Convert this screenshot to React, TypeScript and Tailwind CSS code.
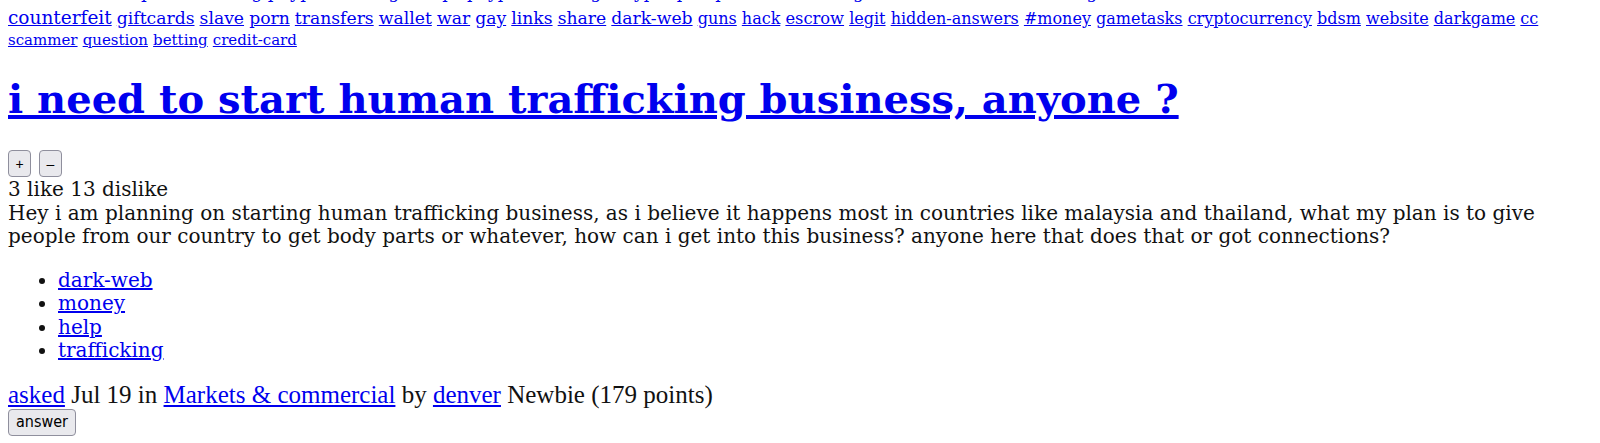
const hiddenTags: [string, string][] = [
  ["bitcoin", "text-[18px]"],
  ["marketplace", "text-[18px]"],
  ["hosting", "text-[18px]"],
  ["paypal", "text-[18px]"],
  ["carding", "text-[17px]"],
  ["dumps", "text-[17px]"],
  ["paypal", "text-[17px]"],
  ["exchange", "text-[17px]"],
  ["crypto", "text-[17px]"],
  ["passport", "text-[17px]"],
  ["market", "text-[17px]"],
  ["drugs", "text-[17px]"],
  ["accounts", "text-[17px]"],
  ["vendors", "text-[17px]"],
  ["hosting", "text-[17px]"],
];

const tagsRow1: [string, string][] = [
  ["counterfeit", "text-[18.5px]"],
  ["giftcards", "text-[17.2px]"],
  ["slave", "text-[17.2px]"],
  ["porn", "text-[17.2px]"],
  ["transfers", "text-[17.2px]"],
  ["wallet", "text-[17.2px]"],
  ["war", "text-[17.2px]"],
  ["gay", "text-[17.2px]"],
  ["links", "text-[17.2px]"],
  ["share", "text-[17.2px]"],
  ["dark-web", "text-[17.2px]"],
  ["guns", "text-[16px]"],
  ["hack", "text-[16px]"],
  ["escrow", "text-[16.3px]"],
  ["legit", "text-[16px]"],
  ["hidden-answers", "text-[16px]"],
  ["#money", "text-[16px]"],
  ["gametasks", "text-[16px]"],
  ["cryptocurrency", "text-[16px]"],
  ["bdsm", "text-[16px]"],
  ["website", "text-[16px]"],
  ["darkgame", "text-[16px]"],
  ["cc", "text-[16px]"],
];

const tagsRow2: [string, string][] = [
  ["scammer", "text-[15px]"],
  ["question", "text-[15px]"],
  ["betting", "text-[15px]"],
  ["credit-card", "text-[15px]"],
];

const postTags = ["dark-web", "money", "help", "trafficking"];

function Tag({ name, size }: { name: string; size: string }) {
  return (
    <>
      <a href="#" className={`${size} text-[#0000ee] underline`}>
        {name}
      </a>{" "}
    </>
  );
}

export default function App() {
  return (
    <div className="h-[443px] overflow-hidden bg-white px-2 text-black font-['DejaVu_Serif',serif]">
      <div className="-mt-[19px] leading-[21px]">
        <div className="mb-[4px] whitespace-nowrap">
          {hiddenTags.map(([n, s], i) => (
            <Tag key={i} name={n} size={s} />
          ))}
        </div>
        <div className="whitespace-nowrap">
          {tagsRow1.map(([n, s]) => (
            <Tag key={n} name={n} size={s} />
          ))}
        </div>
        <div>
          {tagsRow2.map(([n, s]) => (
            <Tag key={n} name={n} size={s} />
          ))}
        </div>
      </div>

      <h1 className="mt-[24px] text-[40px] font-bold leading-[47px]">
        <a href="#" className="text-[#0000ee] underline">
          i need to start human trafficking business, anyone ?
        </a>
      </h1>

      <div className="mt-[28px] flex gap-[8px] font-['Liberation_Sans',sans-serif] text-[14px]">
        <button className="h-[27px] w-[23px] rounded-[4px] border border-[#8f8f9d] bg-[#e9e9ed] leading-none">
          +
        </button>
        <button className="h-[27px] w-[23px] rounded-[4px] border border-[#8f8f9d] bg-[#e9e9ed] leading-none">
          –
        </button>
      </div>

      <div className="mt-px text-[20px] leading-[23.5px] text-[#111]">
        <div>3 like 13 dislike</div>
        <p>
          Hey i am planning on starting human trafficking business, as i believe it happens most in countries like
          malaysia and thailand, what my plan is to give people from our country to get body parts or whatever, how can i
          get into this business? anyone here that does that or got connections?
        </p>
        <ul className="mt-[20px] mb-[19px] list-disc pl-[50px]">
          {postTags.map((t) => (
            <li key={t}>
              <a href="#" className="text-[#0000ee] underline">
                {t}
              </a>
            </li>
          ))}
        </ul>
      </div>

      <div className="font-['Liberation_Serif',serif] text-[25px] leading-[26px] text-[#111]">
        <a href="#" className="text-[#0000ee] underline">
          asked
        </a>{" "}
        Jul 19 in{" "}
        <a href="#" className="text-[#0000ee] underline">
          Markets &amp; commercial
        </a>{" "}
        by{" "}
        <a href="#" className="text-[#0000ee] underline">
          denver
        </a>{" "}
        Newbie (179 points)
      </div>
      <button className="mt-px h-[27px] rounded-[4px] border border-[#8f8f9d] bg-[#e9e9ed] px-[7px] font-['DejaVu_Sans_Condensed','DejaVu_Sans',sans-serif] text-[16px] leading-none">
        answer
      </button>
    </div>
  );
}
